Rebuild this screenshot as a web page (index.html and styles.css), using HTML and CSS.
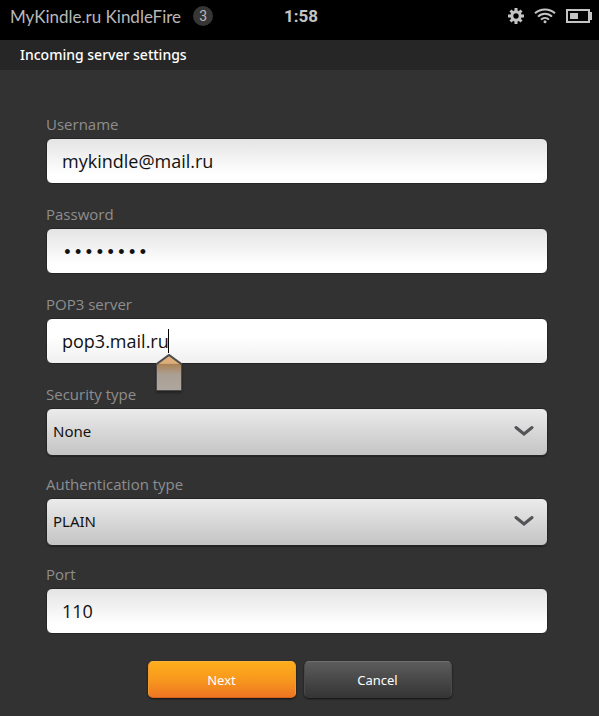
FILE: index.html
```html
<!DOCTYPE html>
<html lang="en">
<head>
    <meta charset="UTF-8">
    <meta name="viewport" content="width=device-width, initial-scale=1.0">
    <title>Incoming server settings</title>
    <link rel="stylesheet" href="styles.css">
</head>
<body>
    <header class="status-bar">
        <div class="device">
            <span class="device-name">MyKindle.ru KindleFire</span>
            <span class="badge">3</span>
        </div>
        <div class="clock">1:58</div>
        <div class="status-icons">
            <svg class="gear" width="16" height="16" viewBox="0 0 16 16">
                <g stroke="#c4c4c4" stroke-width="3">
                    <path d="M8 0V4M8 12V16M0 8H4M12 8H16M2.500 2.500L5 5M11 11L13.500 13.500M2.500 13.500L5 11M11 5L13.500 2.500"/>
                </g>
                <circle cx="8" cy="8" r="4.200" fill="none" stroke="#c4c4c4" stroke-width="3"/>
            </svg>
            <svg class="wifi" width="22" height="16" viewBox="0 0 22 16">
                <g fill="none" stroke="#c4c4c4" stroke-width="2">
                    <path d="M1 5.200C6.500 .1 15.500 .1 21 5.200"/>
                    <path d="M4 8.600C8 4.700 14 4.700 18 8.600"/>
                    <path d="M7 11.600C9.300 9.300 12.700 9.300 15 11.600"/>
                </g>
                <circle cx="11" cy="13.800" r="1.500" fill="#c4c4c4"/>
            </svg>
            <svg class="battery" width="26" height="14" viewBox="0 0 26 14">
                <rect x="1" y="1" width="22" height="12" fill="none" stroke="#c4c4c4" stroke-width="2"/>
                <rect x="4" y="4" width="8" height="6" fill="#c4c4c4"/>
                <rect x="24" y="3" width="2" height="8" fill="#c4c4c4"/>
            </svg>
        </div>
    </header>

    <h1 class="title">Incoming server settings</h1>

    <main>
        <form class="settings">
            <div class="fields">
                <div class="field">
                    <label for="username">Username</label>
                    <input type="text" id="username" name="username" value="mykindle@mail.ru">
                </div>
                <div class="field">
                    <label for="password">Password</label>
                    <input type="password" id="password" name="password" value="password">
                </div>
                <div class="field">
                    <label for="server">POP3 server</label>
                    <input type="text" id="server" class="active" name="server" value="pop3.mail.ru">
                    <span class="caret"></span>
                    <svg class="handle" width="32" height="44" viewBox="0 0 32 44">
                        <defs>
                            <linearGradient id="handle-fill" x1="0" y1="0" x2="0" y2="1">
                                <stop offset="0" stop-color="#e6b27a"/>
                                <stop offset="0.240" stop-color="#d9ad7a"/>
                                <stop offset="0.260" stop-color="#aa8255"/>
                                <stop offset="0.550" stop-color="#ab9f92"/>
                                <stop offset="1" stop-color="#aea69e"/>
                            </linearGradient>
                        </defs>
                        <path d="M3.500 11V37.500H28.500V11" fill="none" stroke="#4b4b4d" stroke-width="1"/>
                        <path d="M16 2L28 11V37H4V11Z" fill="url(#handle-fill)"/>
                        <path d="M3 11.500L16 2L29 11.500" fill="none" stroke="#4b4b4d" stroke-width="2"/>
                    </svg>
                </div>
                <div class="field">
                    <label for="security">Security type</label>
                    <select id="security" name="security">
                        <option>None</option>
                    </select>
                    <svg class="arrow" width="20" height="12" viewBox="0 0 20 12">
                        <path d="M2 2.500L10 9L18 2.500" fill="none" stroke="#535457" stroke-width="3" stroke-linecap="round"/>
                    </svg>
                </div>
                <div class="field">
                    <label for="auth">Authentication type</label>
                    <select id="auth" name="auth">
                        <option>PLAIN</option>
                    </select>
                    <svg class="arrow" width="20" height="12" viewBox="0 0 20 12">
                        <path d="M2 2.500L10 9L18 2.500" fill="none" stroke="#535457" stroke-width="3" stroke-linecap="round"/>
                    </svg>
                </div>
                <div class="field">
                    <label for="port">Port</label>
                    <input type="text" id="port" name="port" value="110">
                </div>
            </div>
            <div class="buttons">
                <button type="submit" class="next">Next</button>
                <button type="button" class="cancel">Cancel</button>
            </div>
        </form>
    </main>
</body>
</html>
```
FILE: styles.css
```css
* {
    box-sizing: border-box;
}

body {
    font-family: "Open Sans", sans-serif;
    margin: 0;
    background-color: #323232;
    color: #fff;
}

.status-bar {
    display: grid;
    grid-template-columns: 1fr auto 1fr;
    align-items: center;
    height: 40px;
    padding: 0 7px 8px 10px;
    background-color: #000;
    color: #c4c4c4;
}

.device {
    display: flex;
    align-items: center;
    gap: 12px;
    font-family: Lato, sans-serif;
    font-size: 17px;
    white-space: nowrap;
}

.device-name {
    color: #b8b8b8;
}

.badge {
    width: 20px;
    height: 20px;
    border-radius: 50%;
    background-color: #363636;
    color: #b8b8b8;
    font: 14px/20px Roboto, sans-serif;
    text-align: center;
}

.clock {
    font: bold 17px Roboto, sans-serif;
}

.status-icons {
    display: flex;
    justify-content: flex-end;
    align-items: center;
    gap: 10px;
}

.title {
    margin: 0;
    padding: 0 20px;
    background-color: #262626;
    font-family: "Noto Sans", sans-serif;
    font-size: 14px;
    font-weight: 500;
    line-height: 30px;
}

.settings {
    padding: 43px 0 18px;
}

.fields {
    padding: 0 51px 0 46px;
}

.field {
    position: relative;
    height: 90px;
}

.field label {
    display: block;
    height: 25px;
    color: #8e8e8e;
    font-size: 15px;
    line-height: 22px;
}

.field input,
.field select {
    display: block;
    width: 100%;
    height: 46px;
    margin: 0;
    border: 1px solid #262427;
    border-radius: 6px;
    outline: none;
    color: #111;
}

.field input {
    padding: 0 15px;
    background: linear-gradient(#e4e4e4, #fff 80%);
    font-family: "Open Sans", sans-serif;
    font-size: 18px;
}

.field input[type="password"] {
    padding-top: 3px;
    font-family: "Liberation Mono", monospace;
}

.field input.active {
    background: linear-gradient(#fff 40%, #f0f0f0);
}

.field select {
    appearance: none;
    height: 48px;
    padding: 0 6px 2px;
    background: linear-gradient(#ebebeb, #c4c4c4);
    box-shadow: 0 1px 1px #222;
    font-family: "Noto Sans", sans-serif;
    font-size: 15px;
}

.arrow {
    position: absolute;
    top: 42px;
    right: 14px;
    pointer-events: none;
}

/* text cursor and its drag handle */
.caret {
    position: absolute;
    top: 36px;
    left: 122px;
    width: 1px;
    height: 24px;
    background-color: #000;
}

.handle {
    position: absolute;
    top: 60px;
    left: 107px;
    z-index: 1;
    filter: drop-shadow(0 2px 1px #222);
}

.buttons {
    display: flex;
    justify-content: center;
    gap: 8px;
    padding-top: 8px;
}

.buttons button {
    width: 148px;
    height: 37px;
    border: 1px solid #555;
    border-radius: 5px;
    box-shadow: 0 1px 2px #111;
    color: #fff;
    font-family: "Noto Sans", sans-serif;
    font-size: 13px;
}

.buttons .next {
    border-color: #fbb040 #f39a2b #d9661c;
    background: linear-gradient(#fdae1c, #f8981d 50%, #ee7623);
}

.buttons .cancel {
    border-color: #707070 #4a4a4a #363636;
    background: linear-gradient(#5c5c5c, #353535);
}
```
